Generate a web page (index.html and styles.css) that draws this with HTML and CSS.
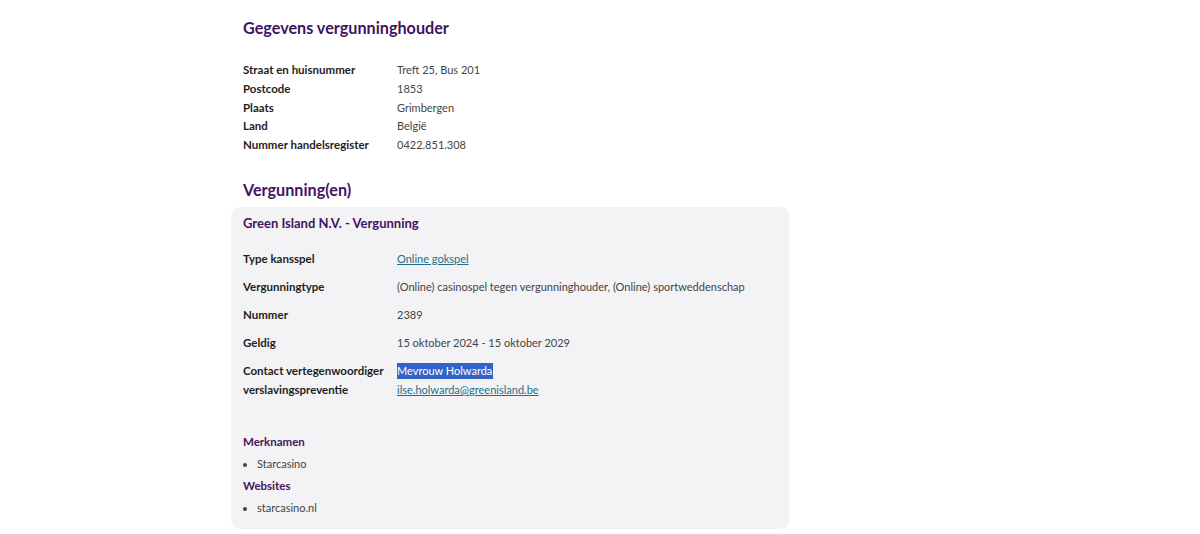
FILE: index.html
```html
<!DOCTYPE html>
<html lang="nl">
<head>
<meta charset="utf-8">
<title>Gegevens vergunninghouder</title>
<link rel="stylesheet" href="styles.css">
</head>
<body>
<main class="page">
  <section class="holder">
    <h2 class="section-title">Gegevens vergunninghouder</h2>
    <dl class="facts">
      <dt>Straat en huisnummer</dt><dd>Treft 25, Bus 201</dd>
      <dt>Postcode</dt><dd>1853</dd>
      <dt>Plaats</dt><dd>Grimbergen</dd>
      <dt>Land</dt><dd>België</dd>
      <dt>Nummer handelsregister</dt><dd>0422.851.308</dd>
    </dl>
  </section>
  <section class="licences">
    <h2 class="section-title sub">Vergunning(en)</h2>
    <article class="card">
      <h3 class="card-title">Green Island N.V. - Vergunning</h3>
      <dl class="card-facts">
        <dt>Type kansspel</dt><dd><a href="#">Online gokspel</a></dd>
        <dt>Vergunningtype</dt><dd>(Online) casinospel tegen vergunninghouder, (Online) sportweddenschap</dd>
        <dt>Nummer</dt><dd>2389</dd>
        <dt>Geldig</dt><dd>15 oktober 2024 - 15 oktober 2029</dd>
        <dt class="multi">Contact vertegenwoordiger verslavingspreventie</dt>
        <dd class="multi"><span class="selected">Mevrouw Holwarda</span><br><a href="#">ilse.holwarda@greenisland.be</a></dd>
      </dl>
      <h4 class="list-title first">Merknamen</h4>
      <ul class="items"><li>Starcasino</li></ul>
      <h4 class="list-title">Websites</h4>
      <ul class="items"><li>starcasino.nl</li></ul>
    </article>
  </section>
</main>
</body>
</html>
```

FILE: styles.css
```css
* { box-sizing: border-box; }
html, body { margin: 0; padding: 0; background: #fff; }
body {
  font-family: Lato, "Noto Sans", sans-serif;
  font-size: 11.5px;
  color: #3a3a3a;
}
.page {
  width: 558px;
  margin-left: 231px;
  padding-top: 17px;
}
.holder { padding-left: 12px; }
.section-title {
  margin: 0;
  font-size: 16.2px;
  line-height: 22px;
  font-weight: 700;
  color: #42145f;
}
.section-title.sub { padding-left: 12px; }
.facts {
  display: grid;
  grid-template-columns: 154px 1fr;
  margin: 22px 0 0;
  line-height: 18.75px;
}
.facts dt { font-weight: 700; color: #1e1e1e; }
.facts dd { margin: 0; color: #444; font-size: 11px; }
.licences { margin-top: 24px; }
.card {
  margin-top: 6px;
  background: #f3f2f4;
  border-radius: 9px;
  padding: 6px 12px 12px;
}
.card-title {
  margin: 0;
  font-size: 13px;
  line-height: 21px;
  font-weight: 700;
  color: #42145f;
}
.card-facts {
  display: grid;
  grid-template-columns: 154px 1fr;
  row-gap: 9px;
  margin: 15px 0 0;
  line-height: 19px;
}
.card-facts dt { font-weight: 700; color: #1e1e1e; }
.card-facts dd { margin: 0; color: #444; font-size: 11px; }
a { color: #1d6f8c; text-decoration: underline; }
.selected { background: #3264c8; color: #fff; padding: 1px 1px 2px 0; }
.list-title {
  margin: 3px 0 0;
  font-size: 11.5px;
  line-height: 19px;
  font-weight: 700;
  color: #42145f;
}
.list-title.first { margin-top: 33px; }
.items {
  margin: 3px 0 0;
  padding-left: 14px;
  line-height: 19px;
  color: #444;
  font-size: 11px;
}
```
